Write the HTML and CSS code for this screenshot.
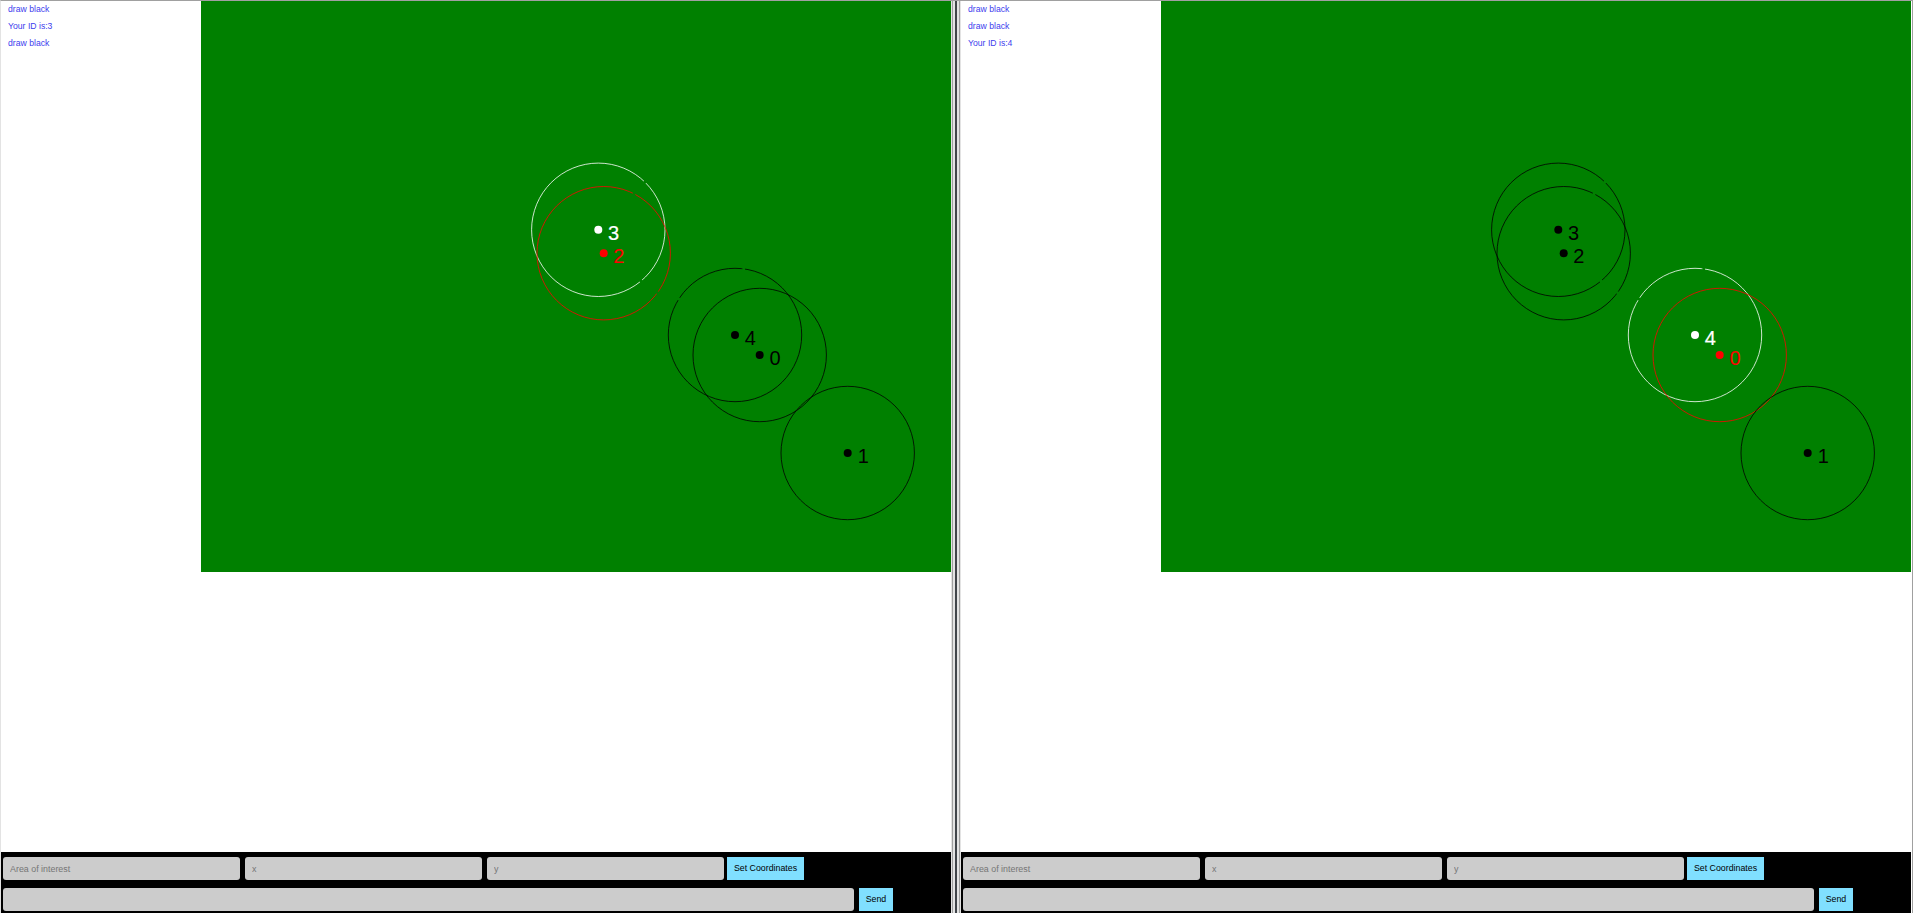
FILE: index.html
```
<!DOCTYPE html>
<html lang="en">
<head>
<meta charset="utf-8">
<title>Area of interest</title>
<link rel="stylesheet" href="styles.css">
</head>
<body>
<div class="screen">
  <section class="pane">
    <div class="view">
      <ul class="messages"><li>draw black</li><li>Your ID is:3</li><li>draw black</li></ul>
      <svg class="field" width="750" height="571" viewBox="201 1 750 571">
        <g class="node own"><circle class="area" cx="598.3" cy="229.8" r="66.7"/><circle class="dot" cx="598.3" cy="229.8" r="4"/><text x="608" y="239.7">3</text></g>
        <g class="node near"><circle class="area" cx="603.7" cy="253.2" r="66.7"/><circle class="dot" cx="603.7" cy="253.2" r="4"/><text x="613.3" y="263.3">2</text></g>
        <g class="node"><circle class="area" cx="735" cy="335" r="66.7"/><circle class="dot" cx="735" cy="335" r="4"/><text x="744.7" y="345.3">4</text></g>
        <g class="node"><circle class="area" cx="759.7" cy="355" r="66.7"/><circle class="dot" cx="759.7" cy="355" r="4"/><text x="769.4" y="365">0</text></g>
        <g class="node"><circle class="area" cx="847.7" cy="453" r="66.7"/><circle class="dot" cx="847.7" cy="453" r="4"/><text x="857.7" y="463">1</text></g>
        <g class="gaps"><circle cx="645" cy="182" r="1.5"/><circle cx="641" cy="280.7" r="1.5"/><circle cx="634" cy="194" r="1.5"/><circle cx="657.7" cy="292.7" r="1.5"/><circle cx="743.7" cy="269" r="1.5"/><circle cx="679" cy="299" r="1.5"/></g>
      </svg>
    </div>
    <form class="controls">
      <div class="row coords"><input class="box" placeholder="Area of interest"><input class="box" placeholder="x"><input class="box" placeholder="y"><button class="btn set" type="button">Set Coordinates</button></div>
      <div class="row"><input class="box long"><button class="btn send" type="button">Send</button></div>
    </form>
  </section>
  <div class="divider"></div>
  <section class="pane">
    <div class="view">
      <ul class="messages"><li>draw black</li><li>draw black</li><li>Your ID is:4</li></ul>
      <svg class="field" width="750" height="571" viewBox="201 1 750 571">
        <g class="node"><circle class="area" cx="598.3" cy="229.8" r="66.7"/><circle class="dot" cx="598.3" cy="229.8" r="4"/><text x="608" y="239.7">3</text></g>
        <g class="node"><circle class="area" cx="603.7" cy="253.2" r="66.7"/><circle class="dot" cx="603.7" cy="253.2" r="4"/><text x="613.3" y="263.3">2</text></g>
        <g class="node own"><circle class="area" cx="735" cy="335" r="66.7"/><circle class="dot" cx="735" cy="335" r="4"/><text x="744.7" y="345.3">4</text></g>
        <g class="node near"><circle class="area" cx="759.7" cy="355" r="66.7"/><circle class="dot" cx="759.7" cy="355" r="4"/><text x="769.4" y="365">0</text></g>
        <g class="node"><circle class="area" cx="847.7" cy="453" r="66.7"/><circle class="dot" cx="847.7" cy="453" r="4"/><text x="857.7" y="463">1</text></g>
        <g class="gaps"><circle cx="645" cy="182" r="1.5"/><circle cx="641" cy="280.7" r="1.5"/><circle cx="634" cy="194" r="1.5"/><circle cx="657.7" cy="292.7" r="1.5"/><circle cx="743.7" cy="269" r="1.5"/><circle cx="679" cy="299" r="1.5"/></g>
      </svg>
    </div>
    <form class="controls">
      <div class="row coords"><input class="box" placeholder="Area of interest"><input class="box" placeholder="x"><input class="box" placeholder="y"><button class="btn set" type="button">Set Coordinates</button></div>
      <div class="row"><input class="box long"><button class="btn send" type="button">Send</button></div>
    </form>
  </section>
</div>
</body>
</html>
```
FILE: styles.css
```
* { box-sizing: border-box; }
html, body { height: 913px; overflow: hidden; }
body { margin: 0; background: #fff; font-family: "Liberation Sans", Arial, sans-serif; }
.screen { display: flex; width: 1913px; height: 913px; border-top: 1px solid #a0a0a0; border-left: 1px solid #e3e3e3; border-right: 1px solid #a0a0a0; }
.pane { width: 950px; flex: none; display: flex; flex-direction: column; }
.divider { width: 10px; flex: none; background: linear-gradient(90deg, #e3e3e3 0 1px, #a0a0a0 1px 2px, #e3e3e3 2px 4px, #41454a 4px 6px, #e3e3e3 6px 8px, #a0a0a0 8px 9px, #e3e3e3 9px 10px); }
.view { display: flex; height: 851px; flex: none; }
.messages { width: 200px; flex: none; margin: 0; padding: 0 0 0 7px; list-style: none; font-size: 8.67px; line-height: 17px; color: #4040ee; }
.field { display: block; flex: none; background: #008000; }
.area { fill: none; stroke: #000; stroke-width: .8; }
.dot { fill: #000; }
.node text { font-size: 20px; fill: #000; }
.own .area { stroke: #fff; }
.own .dot { fill: #fff; }
.own text { fill: #fff; stroke: #fff; stroke-width: .2; }
.near .area { stroke: #f00; stroke-width: .8; }
.near .dot, .near text { fill: #f00; }
.gaps { fill: #008000; }
.controls { flex: 1; margin: 0; padding: 5px 2px 0; background: #000; display: flex; flex-direction: column; gap: 8px; }
.row { display: flex; gap: 5px; }
.box { width: 237px; height: 23px; flex: none; margin: 0; padding: 0 7px; border: 0; border-radius: 3px; background: #ccc; font: 8.9px "Liberation Sans", Arial, sans-serif; }
.box::placeholder { color: #757575; }
.box.long { width: 851px; }
.btn { height: 23px; flex: none; margin: 0; padding: 0 0 1px; border: 0; background: #80dfff; color: #000; font: 8.8px "Liberation Sans", Arial, sans-serif; white-space: nowrap; }
.set { width: 77px; margin-left: -2px; }
.send { width: 34px; }
```
